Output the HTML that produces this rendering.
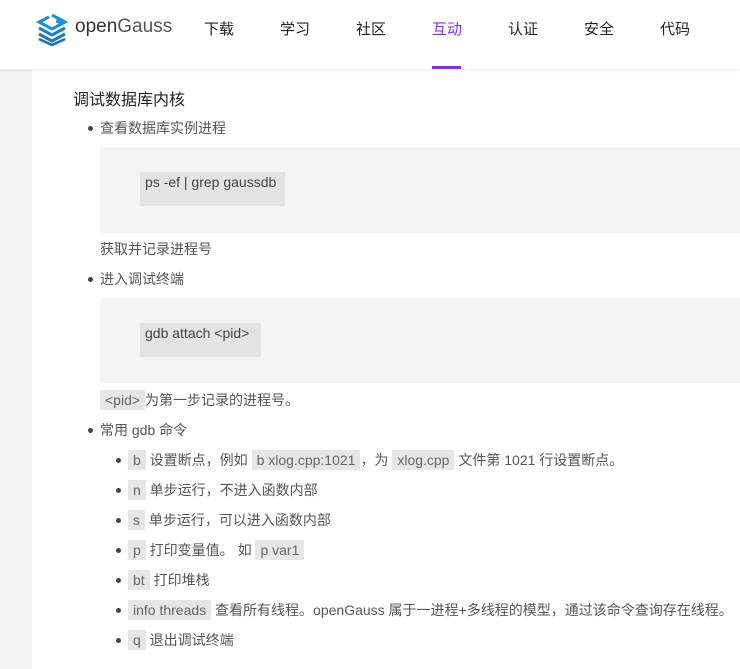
<!DOCTYPE html><html><head><meta charset="utf-8"><style>
*{margin:0;padding:0;box-sizing:border-box}
body{width:740px;height:657px;overflow:hidden;background:#fff;font-family:"Liberation Sans","Noto Sans CJK SC",sans-serif;position:relative}
.hdr{position:absolute;left:0;top:0;width:740px;height:69px;background:#fff;box-shadow:0 1px 4px rgba(0,0,0,.08);z-index:2}
.nav{position:absolute;top:18px;font-size:15px;color:#222;width:40px;text-align:center;margin-left:-20px}
.side{position:absolute;left:0;top:69px;width:32px;height:600px;background:#f3f3f5}
.t{position:absolute;font-size:14px;color:#555;white-space:nowrap;line-height:20px}
.dot{position:absolute;width:5px;height:5px;border-radius:50%;background:#444}
.blk{position:absolute;left:100px;width:660px;background:#f4f4f5;border-radius:3px}
.ic{position:absolute;background:#e3e3e3;font-size:14px;color:#444;padding:2px 5px}
code{background:#e6e6e6;padding:2px 5px;color:#666;font-family:"Liberation Sans",sans-serif}
</style></head><body>
<div class="hdr">
<svg style="position:absolute;left:36px;top:13px" width="32" height="33" viewBox="0 0 32 33">
<path d="M16 2 L29 9 L22 13" fill="none" stroke="#1e8fd5" stroke-width="3"/>
<path d="M13 4 L3 9 L16 16 L27 10 L20 8" fill="none" stroke="#1e8fd5" stroke-width="3"/>
<path d="M3 15 L16 22 L29 15" fill="none" stroke="#1a7fc7" stroke-width="3"/>
<path d="M3 21 L16 28 L29 21" fill="none" stroke="#1a78c0" stroke-width="3"/>
<path d="M3 26 L16 32 L29 26" fill="none" stroke="#176fb5" stroke-width="2.5"/>
</svg>
<div style="position:absolute;left:75px;top:16px;font-size:19px;color:#333"><span style="color:#333">open</span><span style="color:#555">Gauss</span></div>
<div class="nav" style="left:219px">下载</div>
<div class="nav" style="left:295px">学习</div>
<div class="nav" style="left:371px">社区</div>
<div class="nav" style="left:447px;color:#7d32ea">互动</div>
<div style="position:absolute;left:432px;top:66px;width:29px;height:3px;background:#7d32ea"></div>
<div class="nav" style="left:523px">认证</div>
<div class="nav" style="left:599px">安全</div>
<div class="nav" style="left:675px">代码</div>
</div>
<div class="side"></div>
<div class="t" style="left:73px;top:90px;font-size:16px;color:#222;line-height:22px">调试数据库内核</div>
<div class="dot" style="left:88px;top:126px"></div><div class="t" style="left:100px;top:118px">查看数据库实例进程</div>
<div class="blk" style="top:147px;height:86px"></div>
<div class="ic" style="left:140px;top:172px;width:145px;height:34px">ps -ef | grep gaussdb</div>
<div class="t" style="left:100px;top:239px">获取并记录进程号</div>
<div class="dot" style="left:88px;top:277px"></div><div class="t" style="left:100px;top:269px">进入调试终端</div>
<div class="blk" style="top:298px;height:85px"></div>
<div class="ic" style="left:140px;top:323px;width:121px;height:34px">gdb attach &lt;pid&gt;</div>
<div class="t" style="left:100px;top:390px"><code style="padding:2px 5px">&lt;pid&gt;</code>为第一步记录的进程号。</div>
<div class="dot" style="left:88px;top:428px"></div><div class="t" style="left:100px;top:420px">常用 gdb 命令</div>
<div class="dot" style="left:116px;top:458px"></div><div class="t" style="left:128px;top:450px"><code>b</code> 设置断点，例如 <code>b xlog.cpp:1021</code>，为 <code>xlog.cpp</code> 文件第 1021 行设置断点。</div>
<div class="dot" style="left:116px;top:488px"></div><div class="t" style="left:128px;top:480px"><code>n</code> 单步运行，不进入函数内部</div>
<div class="dot" style="left:116px;top:518px"></div><div class="t" style="left:128px;top:510px"><code>s</code> 单步运行，可以进入函数内部</div>
<div class="dot" style="left:116px;top:548px"></div><div class="t" style="left:128px;top:540px"><code>p</code> 打印变量值。 如 <code>p var1</code></div>
<div class="dot" style="left:116px;top:578px"></div><div class="t" style="left:128px;top:570px"><code>bt</code> 打印堆栈</div>
<div class="dot" style="left:116px;top:608px"></div><div class="t" style="left:128px;top:600px"><code>info threads</code> 查看所有线程。openGauss 属于一进程+多线程的模型，通过该命令查询存在线程。</div>
<div class="dot" style="left:116px;top:638px"></div><div class="t" style="left:128px;top:630px"><code>q</code> 退出调试终端</div>
</body></html>
